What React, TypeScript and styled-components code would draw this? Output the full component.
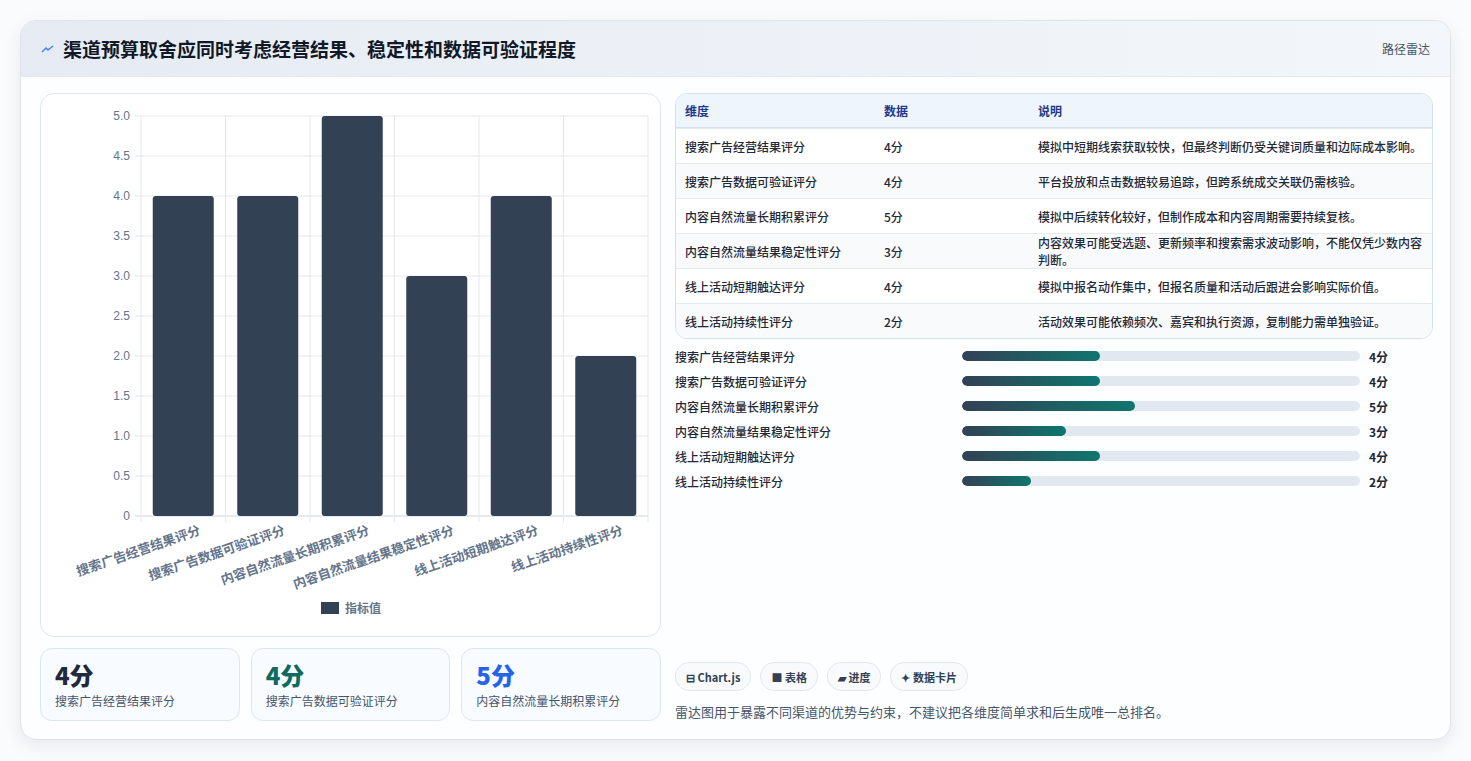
import React, { FC } from 'react';
import styled, { createGlobalStyle } from 'styled-components';

const GlobalStyle = createGlobalStyle`
  html, body { margin: 0; padding: 0; background: #f3f4f6; }
  body { font-family: "Noto Sans CJK SC", "Noto Sans", sans-serif; }
`;

type Row = { name: string; value: number; note: string };

const rows: Row[] = [
  { name: '搜索广告经营结果评分', value: 4, note: '模拟中短期线索获取较快，但最终判断仍受关键词质量和边际成本影响。' },
  { name: '搜索广告数据可验证评分', value: 4, note: '平台投放和点击数据较易追踪，但跨系统成交关联仍需核验。' },
  { name: '内容自然流量长期积累评分', value: 5, note: '模拟中后续转化较好，但制作成本和内容周期需要持续复核。' },
  { name: '内容自然流量结果稳定性评分', value: 3, note: '内容效果可能受选题、更新频率和搜索需求波动影响，不能仅凭少数内容判断。' },
  { name: '线上活动短期触达评分', value: 4, note: '模拟中报名动作集中，但报名质量和活动后跟进会影响实际价值。' },
  { name: '线上活动持续性评分', value: 2, note: '活动效果可能依赖频次、嘉宾和执行资源，复制能力需单独验证。' },
];

const Page = styled.div`
  padding: 20px 20px 20px 20px;
  background: #fafbfc;
  min-height: 761px;
  box-sizing: border-box;
`;

const Card = styled.div`
  background: #fdfeff;
  border: 1px solid #dfe3ea;
  border-radius: 16px;
  box-shadow: 0 6px 18px rgba(15, 23, 42, 0.08);
  overflow: hidden;
  height: 720px;
  box-sizing: border-box;
`;

const Header = styled.div`
  height: 55px;
  display: flex;
  align-items: center;
  justify-content: space-between;
  padding: 0 20px;
  background: linear-gradient(90deg, #e6ebf3, #f3f6fa);
  border-bottom: 1px solid #e5e9f0;
`;

const Title = styled.h1`
  margin: 0;
  font-size: 19px;
  font-weight: 700;
  color: #111827;
  display: flex;
  align-items: center;
  gap: 8px;
`;

const Tag = styled.span`
  font-size: 12px;
  color: #475569;
`;

const Body = styled.div`
  display: grid;
  grid-template-columns: 621px 758px;
  gap: 14px;
  padding: 16px 18px 0 19px;
`;

const Col = styled.div`
  display: flex;
  flex-direction: column;
  gap: 11px;
`;

const ChartCard = styled.div`
  height: 544px;
  border: 1px solid #dfe6ef;
  border-radius: 14px;
  background: #fff;
  box-sizing: border-box;
`;

const Kpis = styled.div`
  display: grid;
  grid-template-columns: repeat(3, 1fr);
  gap: 11px;
`;

const Kpi = styled.div`
  height: 73px;
  border: 1px solid #dbe6f3;
  border-radius: 12px;
  background: #f8fbff;
  padding: 11px 14px;
  box-sizing: border-box;
`;

const KpiValue = styled.div<{ $c: string }>`
  font-size: 24px;
  font-weight: 800;
  color: ${(p) => p.$c};
  line-height: 30px;
`;

const KpiLabel = styled.div`
  font-size: 12px;
  color: #475569;
  margin-top: 2px;
`;

const Table = styled.table`
  width: 100%;
  border-collapse: separate;
  border-spacing: 0;
  border: 1px solid #d6e0eb;
  border-radius: 12px;
  overflow: hidden;
  font-size: 12px;
`;

const Th = styled.th<{ $w?: number }>`
  text-align: left;
  height: 33px;
  padding: 0 9px;
  background: #eef5fd;
  color: #1e3a8a;
  font-weight: 600;
  border-bottom: 1px solid #d6e0eb;
  width: ${(p) => (p.$w ? `${p.$w}px` : 'auto')};
`;

const Td = styled.td<{ $alt: boolean }>`
  height: 34px;
  padding: 0 9px;
  color: #1f2937;
  font-weight: 500;
  background: ${(p) => (p.$alt ? '#f8fafc' : '#fff')};
  border-top: 1px solid #e5eaf0;
`;

const Bars = styled.div`
  display: flex;
  flex-direction: column;
  gap: 7px;
  margin-top: 8px;
`;

const BarRow = styled.div`
  display: grid;
  grid-template-columns: 287px 398px auto;
  align-items: center;
  height: 18px;
  font-size: 12px;
  color: #1f2937;
  font-weight: 500;
`;

const Track = styled.div`
  height: 10px;
  border-radius: 5px;
  background: #e2e8f0;
  overflow: hidden;
`;

const Fill = styled.div`
  height: 100%;
  border-radius: 5px;
  background: linear-gradient(90deg, #334155, #0f766e);
`;

const BarVal = styled.span`
  padding-left: 9px;
  font-weight: 700;
`;

const Spacer = styled.div`
  flex: 1;
`;

const Chips = styled.div`
  display: flex;
  gap: 9px;
`;

const Chip = styled.span`
  height: 27px;
  padding: 0 10px;
  border: 1px solid #e2e8f0;
  border-radius: 14px;
  background: #f8fafc;
  font-size: 11px;
  font-weight: 600;
  color: #334155;
  display: flex;
  align-items: center;
  gap: 4px;
`;

const Note = styled.p`
  margin: 11px 0 0;
  font-size: 13px;
  color: #475569;
`;

const BarChart: FC = () => {
  const x0 = 100, y0 = 22, w = 507, h = 400;
  const step = w / 6;
  const ticks = [0, 0.5, 1, 1.5, 2, 2.5, 3, 3.5, 4, 4.5, 5];
  return (
    <svg width="619" height="542" style={{ display: 'block' }}>
      {ticks.map((t) => {
        const y = y0 + h - (t / 5) * h;
        return (
          <g key={t}>
            <line x1={x0 - 6} x2={x0 + w} y1={y} y2={y} stroke={t === 0 ? '#cbd5e1' : '#e5e7eb'} />
            <text x={x0 - 11} y={y + 4} fontSize="12" fill="#64748b" textAnchor="end" fontFamily="Liberation Sans, sans-serif">
              {t === 0 ? '0' : t.toFixed(1)}
            </text>
          </g>
        );
      })}
      {Array.from({ length: 7 }).map((_, i) => (
        <line key={i} x1={x0 + i * step} x2={x0 + i * step} y1={y0} y2={y0 + h + 6} stroke="#e5e7eb" />
      ))}
      {rows.map((r, i) => {
        const bh = (r.value / 5) * h;
        const cx = x0 + i * step + step / 2;
        return (
          <g key={r.name}>
            <rect x={cx - 30.5} y={y0 + h - bh} width="61" height={bh} rx="3" fill="#334155" />
            <text
              transform={`translate(${cx + 18}, ${y0 + h + 18}) rotate(-19)`}
              fontSize="13"
              fontWeight="600"
              fill="#64748b"
              textAnchor="end"
            >
              {r.name}
            </text>
          </g>
        );
      })}
      <rect x="280" y="508" width="18" height="12" fill="#334155" />
      <text x="304" y="519" fontSize="12" fill="#64748b" fontWeight="600">指标值</text>
    </svg>
  );
};

const App: FC = () => (
  <Page>
    <GlobalStyle />
    <Card>
      <Header>
        <Title>
          <svg width="14" height="10" viewBox="0 0 14 10">
            <path d="M1 8 L5 4 L7 6 L12 2" stroke="#3b82f6" strokeWidth="1.4" fill="none" />
          </svg>
          渠道预算取舍应同时考虑经营结果、稳定性和数据可验证程度
        </Title>
        <Tag>路径雷达</Tag>
      </Header>
      <Body>
        <Col>
          <ChartCard>
            <BarChart />
          </ChartCard>
          <Kpis>
            <Kpi><KpiValue $c="#1f2a3d">4分</KpiValue><KpiLabel>搜索广告经营结果评分</KpiLabel></Kpi>
            <Kpi><KpiValue $c="#0f6b5f">4分</KpiValue><KpiLabel>搜索广告数据可验证评分</KpiLabel></Kpi>
            <Kpi><KpiValue $c="#2563eb">5分</KpiValue><KpiLabel>内容自然流量长期积累评分</KpiLabel></Kpi>
          </Kpis>
        </Col>
        <Col style={{ gap: 0, height: 628 }}>
          <Table>
            <thead>
              <tr><Th $w={181}>维度</Th><Th $w={136}>数据</Th><Th>说明</Th></tr>
            </thead>
            <tbody>
              {rows.map((r, i) => (
                <tr key={r.name}>
                  <Td $alt={i % 2 === 1}>{r.name}</Td>
                  <Td $alt={i % 2 === 1}>{r.value}分</Td>
                  <Td $alt={i % 2 === 1}>{r.note}</Td>
                </tr>
              ))}
            </tbody>
          </Table>
          <Bars>
            {rows.map((r) => (
              <BarRow key={r.name}>
                <span>{r.name}</span>
                <Track><Fill style={{ width: `${r.value * 8.68}%` }} /></Track>
                <BarVal>{r.value}分</BarVal>
              </BarRow>
            ))}
          </Bars>
          <Spacer />
          <Chips>
            <Chip>⊟ Chart.js</Chip>
            <Chip>■ 表格</Chip>
            <Chip>▰ 进度</Chip>
            <Chip>✦ 数据卡片</Chip>
          </Chips>
          <Note>雷达图用于暴露不同渠道的优势与约束，不建议把各维度简单求和后生成唯一总排名。</Note>
        </Col>
      </Body>
    </Card>
  </Page>
);

export default App;
